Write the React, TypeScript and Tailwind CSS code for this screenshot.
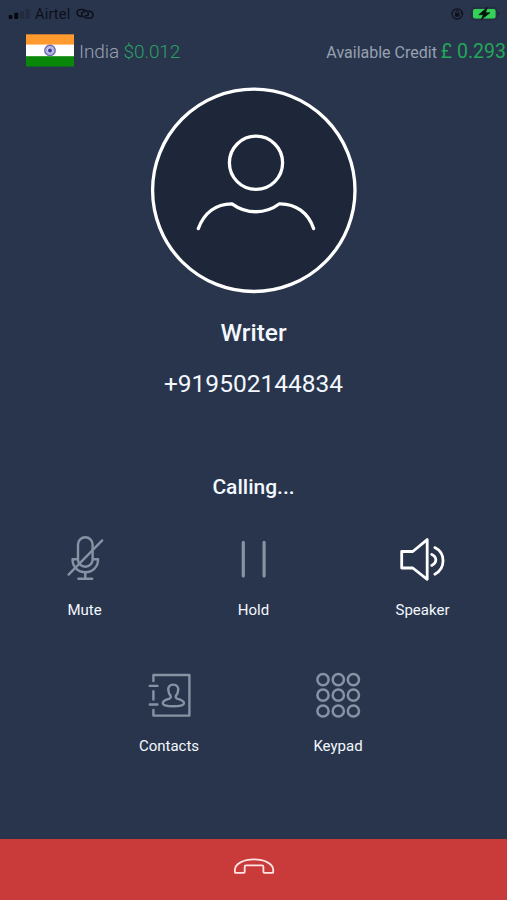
import type { ReactNode } from "react";

function SignalBars() {
  return (
    <svg width="22" height="10" viewBox="8 9 22 10">
      <rect x="8.7" y="15" width="3.6" height="4" rx="1" fill="#05080e" />
      <rect x="14.3" y="12.7" width="4" height="6.3" rx="1" fill="#05080e" />
      <rect x="20" y="11" width="4" height="8" rx="1" fill="#222c40" />
      <rect x="25.6" y="9" width="4" height="10" rx="1" fill="#222c40" />
    </svg>
  );
}

function HotspotIcon() {
  return (
    <svg width="20" height="12" viewBox="76.3 8 20 12" fill="none" stroke="#0b101a" strokeWidth="1.5" strokeLinecap="round">
      <path d="M82.6 16.6 C79.8 16.2 78.3 14.6 78.3 12.6 C78.3 10.4 80.4 9.2 83.2 9.4 C86.8 9.7 90 11.6 89.7 14 C89.6 15.2 88.4 15.9 86.8 15.8" />
      <path d="M90.2 11 C93 11.4 94.4 13 94.4 15 C94.4 17.3 92.3 18.4 89.4 18.2 C85.8 17.9 82.8 16.1 83 13.6 C83.1 12.4 84.2 11.7 85.8 11.9" />
    </svg>
  );
}

function LockIcon() {
  return (
    <svg width="14" height="14" viewBox="450 7 14 14" fill="none" stroke="#0b101a">
      <circle cx="457.2" cy="14" r="5.2" strokeWidth="1.2" />
      <path d="M455.8 13.5 v-1.2 a1.5 1.5 0 0 1 3 0 v1.2" strokeWidth="1" />
      <rect x="455" y="13.2" width="4.5" height="3.5" rx="0.6" fill="#0b101a" stroke="none" />
      <path d="M462 11.5 l1.5 2.2 l-2.5 .2z" fill="#0b101a" stroke="none" />
    </svg>
  );
}

function BatteryIcon() {
  return (
    <svg width="30" height="14" viewBox="470 7 30 14">
      <rect x="471.4" y="7.6" width="25.6" height="12.4" rx="3.6" fill="none" stroke="#222d3e" strokeWidth="1" />
      <path d="M498.3 12 q2 1.6 0 3.4z" fill="#141c2a" />
      <rect x="473" y="9" width="22.6" height="9.4" rx="2" fill="#34d058" />
      <path d="M487.3 7.6 L478.8 14.7 H483.4 L481.2 19.6 L489.9 12.8 H485.4 Z" fill="#07100c" stroke="#07100c" strokeWidth=".7" strokeLinejoin="round" />
    </svg>
  );
}

function IndiaFlag() {
  return (
    <svg width="48" height="33" viewBox="0 0 48 33">
      <rect y="10" width="48" height="13" fill="#fff" />
      <rect y=".3" width="48" height="10.3" fill="#ff9a2e" />
      <rect y="22.2" width="48" height="10.3" fill="#088708" />
      <circle cx="24" cy="16.4" r="5.2" fill="#c9c9ea" stroke="#6a69b3" strokeWidth="1.4" />
      <circle cx="24" cy="16.4" r="3.6" fill="none" stroke="#8a89c6" strokeWidth="1" strokeDasharray=".8 .7" />
      <circle cx="24" cy="16.4" r="2" fill="#3c3a98" />
    </svg>
  );
}

function Avatar() {
  return (
    <svg width="208" height="208" viewBox="150 86 208 208" fill="none" stroke="#fff" strokeWidth="3.3">
      <circle cx="253.8" cy="190.3" r="101.2" fill="#1d2739" />
      <circle cx="256" cy="162.8" r="26.6" />
      <path
        d="M198.3 228.6 C204 213 216 203.6 232 203.8 C246.5 214.4 265.5 214.4 279.5 203.8 C295.5 203.4 308.5 213 313.6 228.6"
        strokeLinecap="round"
        strokeLinejoin="round"
      />
    </svg>
  );
}

function MuteIcon() {
  return (
    <svg width="50" height="50" viewBox="60 534 50 50" fill="none" stroke="#8792a4" strokeWidth="2.4" strokeLinecap="round" strokeLinejoin="round">
      <rect x="78" y="537.2" width="14.6" height="29.6" rx="7.3" />
      <path d="M77.3 559.2 H72.5 C72.5 567 78 572.2 85.3 572.2 S98.1 567 98.1 559.2 H93.5" />
      <path d="M85.3 572.2 V578.8 M78.4 578.8 H92.2" />
      <path d="M68.6 574.6 L102.2 540.4" />
    </svg>
  );
}

function HoldIcon() {
  return (
    <svg width="50" height="50" viewBox="229 534 50 50" stroke="#8792a4" strokeWidth="3.2" strokeLinecap="round">
      <path d="M243.3 542.4 V576 M264.1 542.4 V576" />
    </svg>
  );
}

function SpeakerIcon() {
  return (
    <svg width="50" height="50" viewBox="398 534 50 50" fill="none" stroke="#fff" strokeWidth="2.8" strokeLinejoin="round" strokeLinecap="round">
      <path d="M401.7 551.5 H412.8 L427.2 539.6 V579.3 L412.8 568 H401.7 Z" />
      <path d="M431.7 554.4 C437.2 557 437.2 562.7 431.7 565.4" />
      <path d="M434.8 547.6 C445.8 553 445.8 568.5 434.8 574.2" />
    </svg>
  );
}

function ContactsIcon() {
  return (
    <svg width="50" height="50" viewBox="144 670 50 50" fill="none" stroke="#8792a4" strokeWidth="2.4" strokeLinejoin="round" strokeLinecap="round">
      <path d="M153.4 681 V675 H189.4 V715.6 H153.4 V710" />
      <path d="M153.4 691.3 V699.5 M149.8 685.9 H157.4 M149.8 704.5 H157.4" />
      <path d="M173.2 684.6 C169.6 684.6 168 687.3 168.3 690.2 C168.5 692.7 169.3 694.3 170.5 695.6 C171.2 696.9 170.7 698.3 168.8 698.9 C165.3 699.9 162.8 701 162.8 703.2 C162.8 705.2 167 706.2 173.2 706.2 S184 705.2 184 703.2 C184 701 181.2 699.9 177.7 698.9 C175.8 698.3 175.3 696.9 176 695.6 C177.2 694.3 178 692.7 178.2 690.2 C178.5 687.3 176.8 684.6 173.2 684.6 Z" />
    </svg>
  );
}

function KeypadIcon() {
  const rows = [679.7, 695.2, 711];
  const columns = [323, 338.3, 353.4];
  return (
    <svg width="50" height="50" viewBox="313 670 50 50" fill="none" stroke="#8792a4" strokeWidth="2.5">
      {rows.map((cy) => columns.map((cx) => <circle key={`${cx}-${cy}`} cx={cx} cy={cy} r="5.6" />))}
    </svg>
  );
}

function HangUpIcon() {
  return (
    <svg width="44" height="20" viewBox="232 856 44 20" fill="none" stroke="#ffe4e4" strokeWidth="1.8" strokeLinejoin="round">
      <path d="M234.9 872.2 V869.8 C234.9 863.8 243.5 859.4 254 859.4 S273.2 863.8 273.2 869.8 V872.2 Q273.2 872.8 272.6 872.8 H264.2 Q263.4 872.8 263.4 872 V866.7 Q263.4 865.4 262.1 865.4 H246 Q244.7 865.4 244.7 866.7 V872 Q244.7 872.8 243.9 872.8 H235.5 Q234.9 872.8 234.9 872.2 Z" />
    </svg>
  );
}

function Action({ label, children }: { label: string; children: ReactNode }) {
  return (
    <button className="flex w-1/3 flex-col items-center">
      {children}
      <span className="mt-4 text-[15px] leading-5">{label}</span>
    </button>
  );
}

export default function App() {
  return (
    <main className="flex h-[900px] w-[507px] flex-col overflow-hidden bg-[#29354c] font-['Roboto',sans-serif] text-[#f3f8ff]">
      <header className="flex h-7 shrink-0 items-center pr-[7px] pl-2">
        <SignalBars />
        <span className="mt-px ml-[5px] text-[14.5px] tracking-[0.2px] text-[#0b101a]">Airtel</span>
        <span className="ml-[5px]"><HotspotIcon /></span>
        <span className="ml-auto"><LockIcon /></span>
        <span className="ml-1.5"><BatteryIcon /></span>
      </header>

      <section className="flex h-[45px] shrink-0 items-center pl-[26px] whitespace-nowrap">
        <IndiaFlag />
        <p className="mt-0.5 ml-[5px] text-[19px] leading-6 font-light tracking-[-0.1px] text-[#98a0b1]">
          India <span className="text-[#2aa066]">$0.012</span>
        </p>
        <p className="mt-1 ml-auto pr-px text-[16px] leading-6 text-[#97a1b2]">
          Available Credit <span className="text-[19.5px] text-[#22a65b]">£ 0.293</span>
        </p>
      </section>

      <section className="flex shrink-0 flex-col items-center pt-[13px]">
        <Avatar />
        <h1 className="mt-[23px] text-[24.5px] leading-8 font-medium">Writer</h1>
        <p className="mt-[19px] text-[24.5px] leading-8">+919502144834</p>
        <p className="mt-[71px] text-[21px] leading-8 font-medium">Calling...</p>
      </section>

      <section className="mt-[31px] flex shrink-0 flex-col gap-[50px]">
        <div className="flex">
          <Action label="Mute"><MuteIcon /></Action>
          <Action label="Hold"><HoldIcon /></Action>
          <Action label="Speaker"><SpeakerIcon /></Action>
        </div>
        <div className="flex justify-center">
          <Action label="Contacts"><ContactsIcon /></Action>
          <Action label="Keypad"><KeypadIcon /></Action>
        </div>
      </section>

      <button className="mt-auto flex h-[61px] shrink-0 items-start justify-center bg-[#c93a3a] pt-[17px]" aria-label="End call">
        <HangUpIcon />
      </button>
    </main>
  );
}
